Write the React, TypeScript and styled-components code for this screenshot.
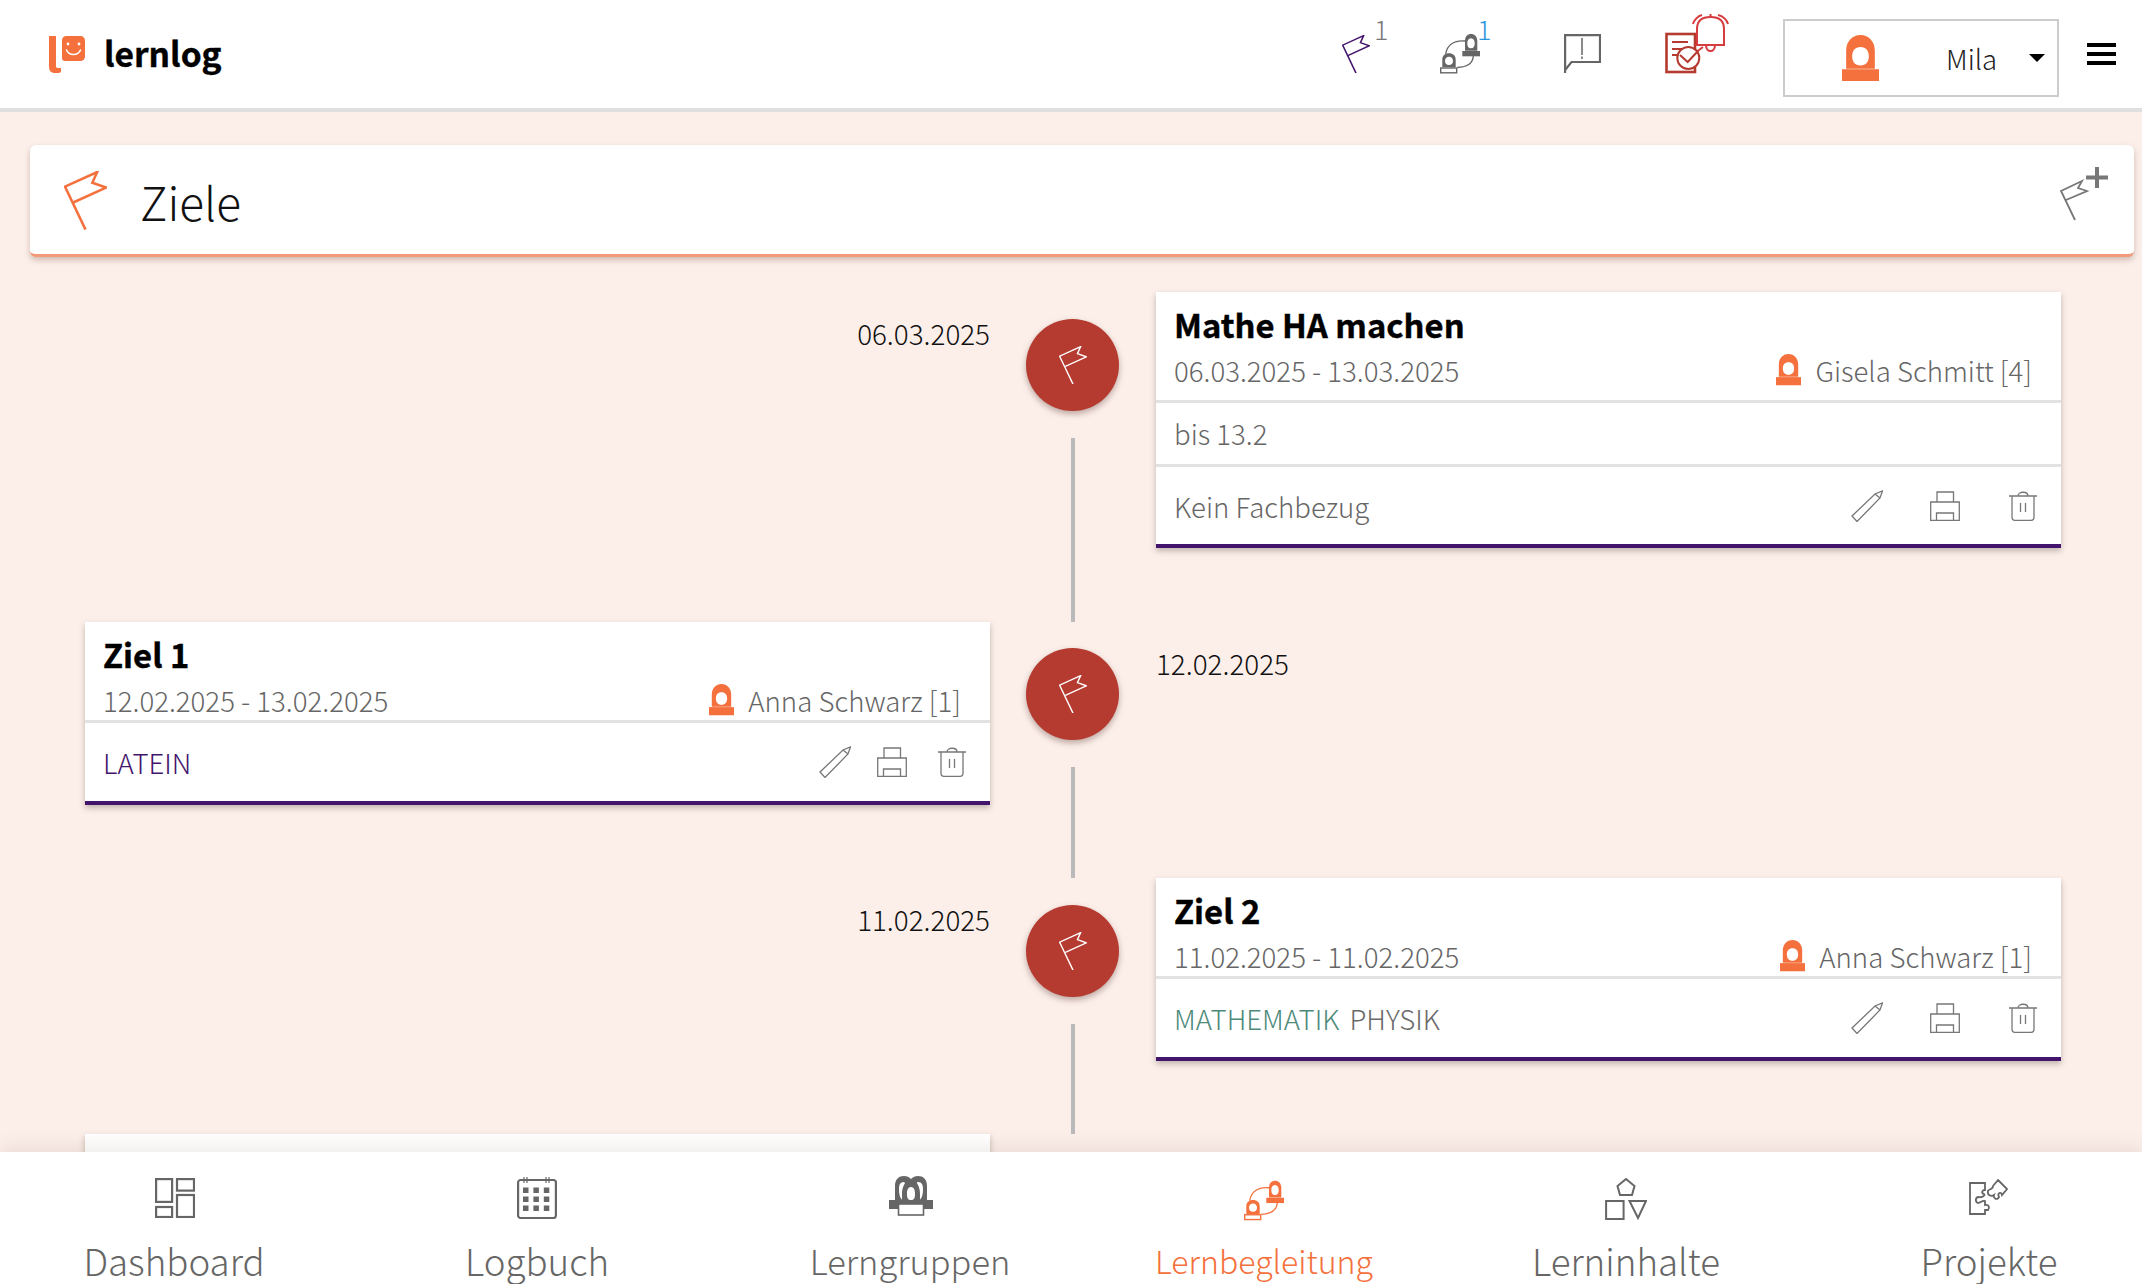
import React from "react";
import styled, { createGlobalStyle } from "styled-components";

const orange = "#f4703c";
const purple = "#43146b";
const gray = "#666666";
const FONT = `"Noto Sans CJK SC", "Noto Sans", sans-serif`;

const Global = createGlobalStyle`
  html, body { margin: 0; padding: 0; height: 100%; background: #fff; }
  body { font-family: ${FONT}; font-weight: 200; color: ${gray}; }
  #root { height: 100%; }
  * { box-sizing: border-box; }
`;

const Page = styled.div`
  width: 2142px;
  height: 1284px;
  display: flex;
  flex-direction: column;
  overflow: hidden;
`;

const Header = styled.header`
  height: 112px;
  flex: none;
  background: #fff;
  border-bottom: 4px solid #dfdfdf;
  display: flex;
  align-items: center;
  padding: 0 26px 0 49px;
`;

const Brand = styled.div`
  display: flex;
  align-items: center;
  gap: 18px;
  margin-right: auto;
`;

const BrandName = styled.span`
  font-size: 33.5px;
  font-weight: 700;
  color: #000;
  line-height: 1;
  margin-top: -2px;
  -webkit-text-stroke: 0.4px #000;
`;

const HeaderIcon = styled.div<{ $w: number; $ml: number; $lift?: number }>`
  position: relative;
  flex: none;
  width: ${(p) => p.$w}px;
  margin-left: ${(p) => p.$ml}px;
  height: 100px;
  padding-bottom: ${(p) => p.$lift ?? 0}px;
  display: flex;
  align-items: center;
`;

const Count = styled.span<{ $c: string; $left: number }>`
  position: absolute;
  left: ${(p) => p.$left}px;
  top: 11px;
  font-size: 27px;
  line-height: 1;
  color: ${(p) => p.$c};
`;

const UserBox = styled.div`
  width: 276px;
  height: 78px;
  margin-left: 54px;
  margin-top: 8px;
  border: 2px solid #cccccc;
  display: flex;
  align-items: center;
  padding-left: 57px;
  color: #222;
`;

const UserName = styled.span`
  font-size: 27.5px;
  margin-left: 67px;
`;

const Caret = styled.span`
  margin-left: 32px;
  width: 0;
  height: 0;
  border-left: 8px solid transparent;
  border-right: 8px solid transparent;
  border-top: 8px solid #000;
`;

const Burger = styled.div`
  margin-left: 28px;
  width: 29px;
  height: 22px;
  border-top: 4px solid #000;
  border-bottom: 4px solid #000;
  display: flex;
  align-items: center;
  &::before {
    content: "";
    display: block;
    width: 100%;
    height: 4px;
    background: #000;
  }
`;

const Main = styled.main`
  flex: 1;
  min-height: 0;
  background: #fcefea;
  padding: 33px 8px 0 30px;
  overflow: hidden;
`;

const TitleCard = styled.section`
  height: 112px;
  background: #fff;
  border-radius: 6px;
  border-bottom: 3px solid #f39a78;
  box-shadow: 0 3px 6px rgba(90, 50, 30, 0.28);
  display: flex;
  align-items: center;
  padding: 0 26px 0 34px;
`;

const TitleFlag = styled.div`
  margin-top: 2px;
`;

const Title = styled.h1`
  margin: 2px 0 0 33px;
  font-size: 46px;
  font-weight: 300;
  color: #111;
  line-height: 1;
  flex: 1;
`;

const AddSlot = styled.div`
  margin-bottom: 14px;
`;

const Timeline = styled.div`
  margin: 35px 73px 0 55px;
`;

const Row = styled.div`
  display: grid;
  grid-template-columns: 905px 166px 905px;
`;

const Side = styled.div<{ $pad: number }>`
  padding-bottom: ${(p) => p.$pad}px;
`;

const DateLabel = styled.div<{ $right?: boolean }>`
  font-size: 27.8px;
  font-weight: 300;
  color: #111;
  line-height: 36px;
  padding-top: 23px;
  text-align: ${(p) => (p.$right ? "right" : "left")};
`;

const Axis = styled.div<{ $top: number }>`
  display: flex;
  flex-direction: column;
  align-items: center;
  padding-top: ${(p) => p.$top}px;
`;

const Dot = styled.div`
  width: 93px;
  height: 92px;
  margin-left: -1px;
  border-radius: 50%;
  flex: none;
  background: #b53a30;
  box-shadow: 0 3px 6px rgba(70, 30, 20, 0.35);
  display: flex;
  align-items: center;
  justify-content: center;
`;

const AxisLine = styled.div`
  width: 4px;
  flex: 1;
  margin-top: 27px;
  background: #bababa;
`;

const Card = styled.article`
  background: #fff;
  border-bottom: 4px solid ${purple};
  box-shadow: 0 3px 6px rgba(60, 40, 30, 0.3);
`;

const CardStub = styled.div`
  height: 60px;
  background: #fff;
  box-shadow: 0 3px 6px rgba(60, 40, 30, 0.3);
`;

const CardHead = styled.div<{ $h: number }>`
  padding: 9px 29px 0 18px;
  height: ${(p) => p.$h}px;
  border-bottom: 3px solid #e2e2e2;
`;

const CardTitle = styled.h2`
  margin: 0;
  font-size: 32.8px;
  font-weight: 700;
  color: #000;
  line-height: 46px;
  -webkit-text-stroke: 0.4px #000;
`;

const MetaRow = styled.div`
  display: flex;
  align-items: center;
  justify-content: space-between;
  margin-top: 3px;
  line-height: 40px;
  font-size: 27.6px;
`;

const Person = styled.span`
  display: flex;
  align-items: center;
  gap: 14px;
`;

const Note = styled.div`
  height: 64px;
  padding: 0 18px;
  font-size: 27.6px;
  line-height: 60px;
  border-bottom: 3px solid #e2e2e2;
`;

const CardFoot = styled.div<{ $h: number }>`
  height: ${(p) => p.$h}px;
  padding: 0 24px 0 18px;
  display: flex;
  align-items: center;
  justify-content: space-between;
  font-size: 27.6px;
`;

const Tags = styled.div`
  display: flex;
  gap: 10px;
`;

const Tag = styled.span<{ $c: string }>`
  color: ${(p) => p.$c};
`;

const Actions = styled.div<{ $first: number; $gap: number }>`
  display: flex;
  align-items: center;
  gap: ${(p) => p.$gap}px;
  & > :first-child {
    margin-right: ${(p) => p.$first - p.$gap}px;
  }
`;

const Nav = styled.nav`
  position: relative;
  flex: none;
  height: 132px;
  background: #fff;
  box-shadow: 0 -5px 18px rgba(90, 50, 30, 0.1);
  display: flex;
  padding-left: 24px;
`;

const NavItem = styled.div<{ $ml: number; $active?: boolean; $size: number; $top: number }>`
  width: 300px;
  flex: none;
  margin-left: ${(p) => p.$ml}px;
  padding-top: ${(p) => p.$top}px;
  display: flex;
  flex-direction: column;
  align-items: center;
  font-size: ${(p) => p.$size}px;
  line-height: 48px;
  color: ${(p) => (p.$active ? orange : gray)};
`;

const NavIconSlot = styled.div<{ $h: number; $dx: number }>`
  height: ${(p) => p.$h}px;
  padding-left: ${(p) => p.$dx}px;
  display: flex;
  align-items: flex-start;
`;

const Svg = styled.svg`
  display: block;
  flex: none;
`;

const FlagIcon = ({ c, w, sw }: { c: string; w: number; sw: number }) => (
  <Svg width={w} height={w * (60 / 44)} viewBox="0 0 44 60" fill="none" stroke={c} strokeWidth={sw}>
    <path d="M22 60 L1 16 L34 1 L29 12 L43 17 L10 32" />
  </Svg>
);

const PersonIcon = ({ w = 25, c = orange }: { w?: number; c?: string }) => (
  <Svg width={w} height={w * 1.25} viewBox="0 0 40 50">
    <path
      fill={c}
      fillRule="evenodd"
      d="M4.500 36.500 V17 C4.500 7 11 0 20 0 C29 0 35.500 7 35.500 17 V36.500 Z M20 13 C14 13 11 17 11 23 C11 29 14 33 20 33 C26 33 29 29 29 23 C29 17 26 13 20 13 Z"
    />
    <rect x="0" y="37" width="40" height="13" fill={c} />
  </Svg>
);

const Pair = ({ c, w, h }: { c: string; w: number; h: number }) => (
  <Svg width={w} height={h} viewBox="0 0 40 39.500">
    <path d="M5.700 20 C7 11 14 6 25 7 M33.300 22 C33 29 27 33 17.300 33.500" fill="none" stroke={c} strokeWidth="1.300" />
    <path
      fill={c}
      fillRule="evenodd"
      d="M25 16.700 V7 C25 2.500 27.500 0 31 0 C34.500 0 37.300 2.500 37.300 7 V16.700 Z M31 4.300 C28.500 4.300 27.300 6.500 27.300 9.500 C27.300 12.500 28.500 14.300 31 14.300 C33.500 14.300 34.700 12.500 34.700 9.500 C34.700 6.500 33.500 4.300 31 4.300 Z"
    />
    <rect x="22.300" y="17" width="17.700" height="5.300" fill={c} />
    <path
      fill={c}
      fillRule="evenodd"
      d="M2.300 33.300 V26 C2.300 21.500 5 19.300 9 19.300 C13 19.300 15.700 21.500 15.700 26 V33.300 Z M9 22.700 C6.500 22.700 5 24.500 5 27 C5 29.500 6.500 31 9 31 C11.500 31 13 29.500 13 27 C13 24.500 11.500 22.700 9 22.700 Z"
    />
    <rect x="0.700" y="34" width="16" height="4.800" fill="#fff" stroke={c} strokeWidth="1.400" />
  </Svg>
);

const Speech = () => (
  <Svg width="37" height="40" viewBox="0 0 37 40" fill="none" stroke={gray} strokeWidth="2.200">
    <path d="M1.100 39 V1.100 H36 V28 H7.500 L1.100 36" />
    <path d="M18 4 V21 M18 22.500 V25" strokeWidth="1.500" />
  </Svg>
);

const Alerts = () => (
  <Svg width="64" height="60" viewBox="0 0 64 60" fill="none">
    <rect x="1.500" y="20" width="28.500" height="38" stroke="#b53a30" strokeWidth="2.600" />
    <path d="M7 28 H23 M7 35 H17 M7 41 H12" stroke="#b53a30" strokeWidth="2" />
    <path d="M30 39 L38 33" stroke="#d4393c" strokeWidth="2" />
    <circle cx="23.300" cy="44" r="11" fill="#fff" stroke="#b53a30" strokeWidth="2" />
    <path d="M15 41 L22.700 48 L33 37" stroke="#b53a30" strokeWidth="2" />
    <path d="M32 31 V15 C32 7 37 3 45.500 3 C54 3 59 7 59 15 V31 M30 31 H60" stroke="#d63b3e" strokeWidth="2" />
    <path d="M41 31 C41 39 50 39 50 31" stroke="#d63b3e" strokeWidth="2" />
    <path d="M28 10 C29 6 33 2 37 1 M63 10 C62 6 58 2 53 1 M45.500 0 V3" stroke="#d63b3e" strokeWidth="2" />
  </Svg>
);

const Logo = () => (
  <Svg width="37" height="37" viewBox="0 0 37 37">
    <path fill={orange} d="M0 0 H7 V30 C7 32 8 32 12 32 V35 C12 37 10 37 6 37 C2 37 0 35 0 30 Z" />
    <path fill={orange} d="M17 0 H31 C34 0 36 2 36 5 V20 C36 23 34 25 31 25 H16 C14 25 13 24 13 22 V4 C13 2 15 0 17 0 Z" />
    <circle cx="19" cy="8" r="1.400" fill="#fff" />
    <circle cx="30" cy="8" r="1.400" fill="#fff" />
    <path d="M17.500 14 C20 20 29 20 31.500 14" fill="none" stroke="#fff" strokeWidth="1.600" strokeLinecap="round" />
  </Svg>
);

const AddFlag = () => (
  <Svg width="48" height="58" viewBox="0 0 48 58" fill="none" stroke="#777">
    <path d="M15 56 L1 27 L22 17 L18 24 L27 27 L6 36" strokeWidth="1.800" />
    <path d="M37 3 V24 M26 13.500 H48" strokeWidth="4" />
  </Svg>
);

const Pencil = () => (
  <Svg width="32" height="32" viewBox="0 0 32 32" fill="none" stroke="#777" strokeWidth="1.300">
    <path d="M1 26 L24 4 L31.500 1 L29 8 L6 31.500 Z M24 4 L29 8" />
  </Svg>
);

const Printer = () => (
  <Svg width="30" height="30" viewBox="0 0 30 30" fill="none" stroke="#777" strokeWidth="1.300">
    <path d="M7 11 V1 H23.500 V11 M0.700 29.300 V11 H29.300 V29.300 Z M6.500 29 V22 H23.500 V29" />
  </Svg>
);

const Trash = () => (
  <Svg width="28" height="30" viewBox="0 0 28 30" fill="none" stroke="#777" strokeWidth="1.300">
    <path d="M0 5 H28 M9 5 C9 0 19 0 19 5 M3 5 V26 C3 28 4 29.300 6 29.300 H22 C24 29.300 25 28 25 26 V5 M11.500 12 V21 M16.500 12 V21" />
  </Svg>
);

const Dashboard = () => (
  <Svg width="40" height="40" viewBox="0 0 40 40" fill="none" stroke={gray} strokeWidth="2.200">
    <rect x="1.100" y="1.100" width="16" height="22.800" />
    <rect x="22" y="1.100" width="17" height="11.500" />
    <rect x="1.100" y="29" width="16" height="10" />
    <rect x="22" y="17" width="17" height="22" />
  </Svg>
);

const Calendar = () => (
  <Svg width="40" height="42" viewBox="0 0 40 42" fill="none">
    <rect x="1.100" y="3" width="37.800" height="38" rx="2.500" stroke={gray} strokeWidth="2.200" />
    <path d="M7 0 V6 M10 0 V6 M29 0 V6 M32 0 V6" stroke={gray} strokeWidth="1.200" />
    {[9, 17, 25].map((x) =>
      [13, 22, 31].map((y) => (
        <rect key={`${x}-${y}`} x={x - 3 + (x - 9) * 0.3} y={y - 3 + 0.5} width="5.500" height="5.500" fill={gray} />
      ))
    )}
  </Svg>
);

const Group = () => (
  <Svg width="44" height="40" viewBox="0 0 44 40">
    <path fill={gray} fillRule="evenodd" d="M6 26 V10 C6 3 10 0 15 0 C18 0 20 1 22 3 C24 1 26 0 29 0 C34 0 38 3 38 10 V26 Z M15 6 C11 6 10 9 10 13 C10 20 12 24 14 24 H16 C13 20 13 12 16 7 Z M29 6 C28 6 28 6 28 7 C31 12 31 20 28 24 H30 C32 24 34 20 34 13 C34 9 33 6 29 6 Z" />
    <path fill="#fff" d="M22 8 C16 8 15 13 15 17 C15 24 18 27 22 27 C26 27 29 24 29 17 C29 13 28 8 22 8 Z" />
    <path fill={gray} fillRule="evenodd" d="M22 6 C15 6 13 12 13 18 V25 H31 V18 C31 12 29 6 22 6 Z M22 11 C25 11 26 14 26 18 C26 22 25 24 22 24 C19 24 18 22 18 18 C18 14 19 11 22 11 Z" />
    <rect x="0" y="24" width="44" height="9" fill={gray} />
    <rect x="9.500" y="28" width="25" height="11" fill="#fff" stroke={gray} strokeWidth="1.600" />
  </Svg>
);

const Shapes = () => (
  <Svg width="42" height="42" viewBox="0 0 42 42" fill="none" stroke={gray} strokeWidth="2">
    <path d="M21 1 L29.500 8 L27 17 H15 L12.500 8 Z" />
    <rect x="1.100" y="23" width="17.500" height="18" />
    <path d="M24.500 23 H41 L33 40 Z" />
  </Svg>
);

const Puzzle = () => (
  <Svg width="40" height="36" viewBox="0 0 40 36" fill="none" stroke={gray} strokeWidth="1.800">
    <path d="M1 4 H16 V11 C13 11 12 14 15 15 C17 16 13 19 10 18 C6 18 6 23 9 24 C12 24 13 21 16 22 V26 C20 25 21 29 19 31 H16 V35 H1 Z" />
    <path d="M29 1 L38 10 L33 16 C32 12 28 14 30 18 C28 22 24 19 25 16 C22 18 18 16 19 12 C19 10 24 11 24 7 Z" />
  </Svg>
);

const Goal = ({
  title,
  range,
  person,
  note,
  foot,
  first,
  gap,
}: {
  title: string;
  range: string;
  person: string;
  note?: string;
  foot: React.ReactNode;
  first: number;
  gap: number;
}) => (
  <Card>
    <CardHead $h={note ? 111 : 101}>
      <CardTitle>{title}</CardTitle>
      <MetaRow>
        <span>{range}</span>
        <Person>
          <PersonIcon />
          {person}
        </Person>
      </MetaRow>
    </CardHead>
    {note && <Note>{note}</Note>}
    <CardFoot $h={note ? 77 : 78}>
      {foot}
      <Actions $first={first} $gap={gap}>
        <Pencil />
        <Printer />
        <Trash />
      </Actions>
    </CardFoot>
  </Card>
);

const Marker = ({ top = 27 }: { top?: number }) => (
  <Axis $top={top}>
    <Dot>
      <FlagIcon c="#fff" w={28} sw={2.2} />
    </Dot>
    <AxisLine />
  </Axis>
);

const navItems = [
  { label: "Dashboard", icon: <Dashboard />, ml: 0, size: 36.7, top: 26, text: 97, dx: 2 },
  { label: "Logbuch", icon: <Calendar />, ml: 63, size: 36.7, top: 25, text: 97, dx: 0 },
  { label: "Lerngruppen", icon: <Group />, ml: 73, size: 34.4, top: 24, text: 96, dx: 2 },
  { label: "Lernbegleitung", icon: <Pair c={orange} w={40} h={41} />, ml: 54, size: 32, top: 28, text: 99, dx: 0, active: true },
  { label: "Lerninhalte", icon: <Shapes />, ml: 62, size: 36.7, top: 26, text: 97, dx: 0 },
  { label: "Projekte", icon: <Puzzle />, ml: 63, size: 36.7, top: 27, text: 97, dx: 0 },
];

export default function App() {
  return (
    <Page>
      <Global />
      <Header>
        <Brand>
          <Logo />
          <BrandName>lernlog</BrandName>
        </Brand>
        <HeaderIcon $w={60} $ml={0}>
          <FlagIcon c={purple} w={28} sw={2.4} />
          <Count $c="#777" $left={32}>1</Count>
        </HeaderIcon>
        <HeaderIcon $w={60} $ml={38}>
          <Pair c={gray} w={40} h={39.5} />
          <Count $c="#2a96dc" $left={37}>1</Count>
        </HeaderIcon>
        <HeaderIcon $w={37} $ml={64}>
          <Speech />
        </HeaderIcon>
        <HeaderIcon $w={64} $ml={64} $lift={21}>
          <Alerts />
        </HeaderIcon>
        <UserBox>
          <PersonIcon w={37} />
          <UserName>Mila</UserName>
          <Caret />
        </UserBox>
        <Burger />
      </Header>
      <Main>
        <TitleCard>
          <TitleFlag>
            <FlagIcon c={orange} w={43} sw={2.6} />
          </TitleFlag>
          <Title>Ziele</Title>
          <AddSlot>
            <AddFlag />
          </AddSlot>
        </TitleCard>
        <Timeline>
          <Row>
            <DateLabel $right>06.03.2025</DateLabel>
            <Marker />
            <Side $pad={74}>
              <Goal
                title="Mathe HA machen"
                range="06.03.2025 - 13.03.2025"
                person="Gisela Schmitt [4]"
                note="bis 13.2"
                foot={<span>Kein Fachbezug</span>}
                first={47}
                gap={49}
              />
            </Side>
          </Row>
          <Row>
            <Side $pad={73}>
              <Goal
                title="Ziel 1"
                range="12.02.2025 - 13.02.2025"
                person="Anna Schwarz [1]"
                foot={<Tag $c={purple}>LATEIN</Tag>}
                first={26}
                gap={31}
              />
            </Side>
            <Marker top={26} />
            <DateLabel>12.02.2025</DateLabel>
          </Row>
          <Row>
            <DateLabel $right>11.02.2025</DateLabel>
            <Marker />
            <Side $pad={73}>
              <Goal
                title="Ziel 2"
                range="11.02.2025 - 11.02.2025"
                person="Anna Schwarz [1]"
                foot={
                  <Tags>
                    <Tag $c="#4f8a7b">MATHEMATIK</Tag>
                    <Tag $c="#6a6a6a">PHYSIK</Tag>
                  </Tags>
                }
                first={47}
                gap={49}
              />
            </Side>
          </Row>
          <Row>
            <Side $pad={0}>
              <CardStub />
            </Side>
          </Row>
        </Timeline>
      </Main>
      <Nav>
        {navItems.map((n) => (
          <NavItem key={n.label} $ml={n.ml} $size={n.size} $top={n.top} $active={n.active}>
            <NavIconSlot $h={n.text - n.top} $dx={n.dx}>{n.icon}</NavIconSlot>
            {n.label}
          </NavItem>
        ))}
      </Nav>
    </Page>
  );
}
